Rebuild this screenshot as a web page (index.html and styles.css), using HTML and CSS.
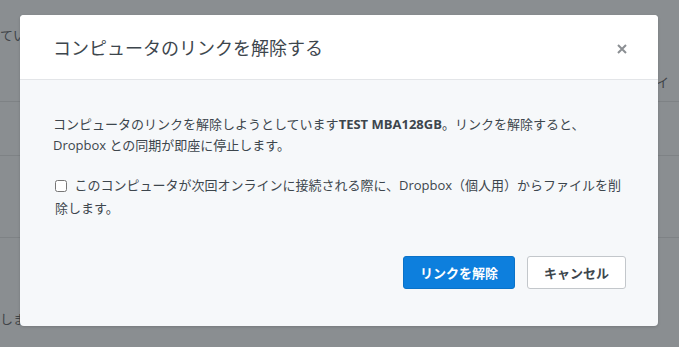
FILE: index.html
```html
<!DOCTYPE html>
<html lang="ja">
<head>
    <meta charset="UTF-8">
    <title>コンピュータのリンクを解除する</title>
    <link rel="stylesheet" href="styles.css">
</head>
<body>
    <!-- page behind the dialog -->
    <div class="page">
        <div class="row row-first">
            <span class="row-text">ていま</span>
            <span class="row-text right">イ</span>
        </div>
        <div class="row row-second"></div>
        <div class="row row-third"></div>
        <div class="row row-last"><span class="row-text">しま</span></div>
    </div>

    <div class="modal">
        <div class="modal-header">
            <h1 class="modal-title">コンピュータのリンクを解除する</h1>
            <button class="close" aria-label="閉じる">
                <svg viewBox="0 0 10 10" width="10" height="10">
                    <path d="M1 1L9 9M9 1L1 9"></path>
                </svg>
            </button>
        </div>
        <div class="modal-body">
            <p class="message">コンピュータのリンクを解除しようとしています<b>TEST MBA128GB</b>。リンクを解除すると、<br>Dropbox との同期が即座に停止します。</p>
            <label class="option">
                <input type="checkbox"> このコンピュータが次回オンラインに接続される際に、Dropbox（個人用）からファイルを削除します。
            </label>
            <div class="actions">
                <button class="btn btn-primary">リンクを解除</button>
                <button class="btn btn-default">キャンセル</button>
            </div>
        </div>
    </div>
</body>
</html>
```

FILE: styles.css
```css
body {
    margin: 0;
    background-color: #8a8e91;
    font-family: "Open Sans", "Noto Sans CJK JP", sans-serif;
    color: #3d464d;
    overflow: hidden;
}

/* background page, already dimmed */
.page {
    height: 347px;
}

.row {
    border-bottom: 1px solid #7e8285;
    color: #3f4448;
    font-size: 13px;
    line-height: 18px;
}

.row-first {
    height: 102px;
    display: flex;
    flex-direction: column;
    padding-top: 26px;
    box-sizing: border-box;
}

.row-second {
    height: 53px;
}

.row-third {
    height: 81px;
}

.row-last {
    height: 100px;
    border-bottom: none;
}

.row-text {
    display: block;
}

.row-text.right {
    margin: 29px 0 0 656px;
}

.row-last .row-text {
    padding-top: 72px;
}

/* dialog */
.modal {
    position: absolute;
    top: 15px;
    left: 20px;
    width: 638px;
    height: 311px;
    background: #f6f8fa;
    border-radius: 4px;
    overflow: hidden;
    box-shadow: 0 1px 3px rgba(0, 0, 0, 0.15);
}

.modal-header {
    height: 64px;
    background: #ffffff;
    border-bottom: 1px solid #e3e5e8;
    display: flex;
    align-items: center;
    justify-content: space-between;
    padding: 0 31px 0 33px;
}

.modal-title {
    margin: 0;
    font-size: 18px;
    font-weight: normal;
    color: #3d464d;
}

.close {
    background: none;
    border: none;
    padding: 0;
    width: 10px;
    height: 10px;
    margin-top: 3px;
    cursor: pointer;
    display: flex;
}

.close path {
    stroke: #8b8f93;
    stroke-width: 2;
    fill: none;
}

.modal-body {
    padding: 34px 32px 0 33px;
    font-size: 13px;
}

.message {
    margin: 0 0 18px;
    line-height: 21px;
}

.message b {
    font-weight: 700;
}

.option {
    display: block;
    line-height: 23px;
    padding-left: 2px;
}

.option input {
    width: 12px;
    height: 12px;
    margin: 0 4px 0 0;
    vertical-align: -2px;
}

.actions {
    display: flex;
    justify-content: flex-end;
    gap: 12px;
    margin-top: 36px;
}

.btn {
    height: 33px;
    border-radius: 3px;
    font-family: "Open Sans", "Noto Sans CJK JP", sans-serif;
    font-size: 13px;
    font-weight: 700;
    cursor: pointer;
}

.btn-primary {
    width: 112px;
    background: #0d7fdd;
    border: 1px solid #0a72c8;
    color: #ffffff;
}

.btn-default {
    width: 99px;
    background: #ffffff;
    border: 1px solid #c3c7cb;
    color: #3d464d;
}
```
